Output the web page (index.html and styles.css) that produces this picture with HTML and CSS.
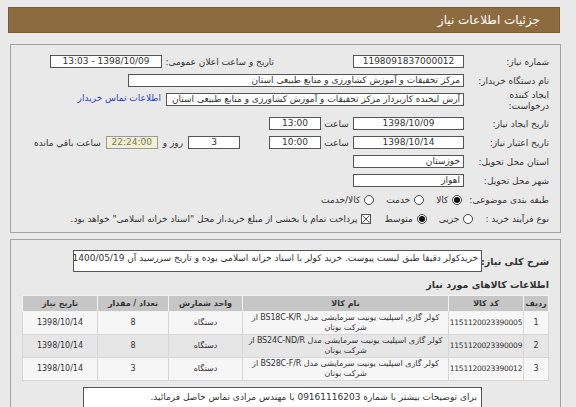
FILE: index.html
```html
<!DOCTYPE html>
<html lang="fa" dir="rtl">
<head>
<meta charset="utf-8">
<title>جزئیات اطلاعات نیاز</title>
<link rel="stylesheet" href="styles.css">
</head>
<body>
<div class="header"><span>جزئیات اطلاعات نیاز</span></div>

<div class="panel p1">
  <div class="row">
    <span class="lbl">شماره نیاز:</span>
    <span class="box w111 c">1198091837000012</span>
    <span class="lbl2">تاریخ و ساعت اعلان عمومی:</span>
    <span class="box w112 c">1398/10/09 - 13:03</span>
  </div>
  <div class="row">
    <span class="lbl">نام دستگاه خریدار:</span>
    <span class="box w336">مرکز تحقیقات و آموزش کشاورزی و منابع طبیعی استان</span>
  </div>
  <div class="row r3">
    <span class="lbl two">ایجاد کننده<br>درخواست:</span>
    <span class="box w298 mt">آرش لبخنده کاربردار مرکز تحقیقات و آموزش کشاورزی و منابع طبیعی استان</span>
    <a class="link mt" href="#">اطلاعات تماس خریدار</a>
  </div>
  <div class="row">
    <span class="lbl">تاریخ ایجاد نیاز:</span>
    <span class="box w111 c">1398/10/09</span>
    <span class="sa">ساعت</span>
    <span class="box w52 c">13:00</span>
  </div>
  <div class="row">
    <span class="lbl">تاریخ اعتبار نیاز:</span>
    <span class="box w111 c">1398/10/14</span>
    <span class="sa">ساعت</span>
    <span class="box w52 c">10:00</span>
    <span class="box w52 c days">3</span>
    <span class="rz">روز و</span>
    <span class="box w52 c remain">22:24:00</span>
    <span class="rm">ساعت باقي مانده</span>
  </div>
  <div class="row">
    <span class="lbl">استان محل تحویل:</span>
    <span class="box w111">خوزستان</span>
  </div>
  <div class="row">
    <span class="lbl">شهر محل تحویل:</span>
    <span class="box w111">اهواز</span>
  </div>
  <div class="row">
    <span class="lbl8">طبقه بندی موضوعی:</span>
    <span class="opt"><i class="radio on"></i>کالا</span>
    <span class="opt"><i class="radio"></i>خدمت</span>
    <span class="opt"><i class="radio"></i>کالا/خدمت</span>
  </div>
  <div class="row">
    <span class="lbl9">نوع فرآیند خرید :</span>
    <span class="opt"><i class="radio"></i>جزیی</span>
    <span class="opt"><i class="radio on"></i>متوسط</span>
    <span class="opt chk"><svg class="cb" width="10" height="10" viewBox="0 0 10 10"><rect x="0.5" y="0.5" width="9" height="9" fill="#fff" stroke="#555"/><path d="M1.5 1.5L8.5 8.5M8.5 1.5L1.5 8.5" stroke="#555" stroke-width="1"/></svg>پرداخت تمام یا بخشی از مبلغ خرید،از محل "اسناد خزانه اسلامی" خواهد بود.</span>
  </div>
</div>

<div class="panel p2">
  <div class="desc-row">
    <span class="dlbl">شرح کلی نیاز:</span>
    <div class="descbox">خریدکولر دقیقا طبق لیست پیوست. خرید کولر با اسناد خزانه اسلامی بوده و تاریخ سررسید آن 1400/05/19</div>
  </div>
  <div class="title">اطلاعات کالاهای مورد نیاز</div>
  <table class="items">
    <colgroup>
      <col class="c1"><col class="c2"><col class="c3"><col class="c4"><col class="c5"><col class="c6">
    </colgroup>
    <thead>
      <tr>
        <th>ردیف</th>
        <th>کد کالا</th>
        <th>نام کالا</th>
        <th>واحد شمارش</th>
        <th>تعداد / مقدار</th>
        <th>تاریخ نیاز</th>
      </tr>
    </thead>
    <tbody>
      <tr>
        <td>1</td>
        <td class="code">1151120023390005</td>
        <td class="name"><span class="l1">کولر گازی اسپلیت یونیت سرمایشی مدل <bdi>BS18C-K/R</bdi> از</span><br>شرکت بوتان</td>
        <td class="unit">دستگاه</td>
        <td>8</td>
        <td>1398/10/14</td>
      </tr>
      <tr class="alt">
        <td>2</td>
        <td class="code">1151120023390009</td>
        <td class="name"><span class="l1">کولر گازی اسپلیت یونیت سرمایشی مدل <bdi>BS24C-ND/R</bdi> از</span><br>شرکت بوتان</td>
        <td class="unit">دستگاه</td>
        <td>8</td>
        <td>1398/10/14</td>
      </tr>
      <tr>
        <td>3</td>
        <td class="code">1151120023390012</td>
        <td class="name"><span class="l1">کولر گازی اسپلیت یونیت سرمایشی مدل <bdi>BS28C-F/R</bdi> از</span><br>شرکت بوتان</td>
        <td class="unit">دستگاه</td>
        <td>3</td>
        <td>1398/10/14</td>
      </tr>
    </tbody>
  </table>
  <div class="notebox">برای توضیحات بیشتر با شماره 09161116203 با مهندس مرادی تماس حاصل فرمائید.</div>
</div>
</body>
</html>
```

FILE: styles.css
```css
html, body {
  margin: 0;
  padding: 0;
  background: #e9e9e9;
}
body {
  font-family: "DejaVu Sans", sans-serif;
  font-size: 9px;
  color: #333;
  width: 576px;
  height: 407px;
  overflow: hidden;
}
.header {
  margin: 7px 16px 0 8px;
  height: 26px;
  background: #8c6b40;
  color: #fff;
  display: flex;
  align-items: center;
  padding-right: 19px;
  font-size: 12px;
  border: 1px solid #7a5c35;
  box-sizing: border-box;
}
.panel {
  margin: 0 15px 0 10px;
  border: 1px solid #a3a3a3;
  background: #e9e9e9;
  box-sizing: border-box;
}
.p1 {
  margin-top: 11px;
  height: 189px;
  padding: 7px 11px 0 0;
}
.row {
  display: flex;
  align-items: center;
  height: 19px;
  white-space: nowrap;
}
.r3 {
  height: 24px;
  align-items: flex-start;
}
.lbl {
  width: 85px;
  flex: none;
  text-align: right;
}
.lbl.two {
  line-height: 11px;
}
.lbl8 {
  flex: none;
  margin-left: 7px;
}
.lbl9 {
  flex: none;
  margin-left: 12px;
}
.box {
  display: inline-block;
  flex: none;
  box-sizing: border-box;
  height: 13px;
  line-height: 11px;
  border: 1px solid #555;
  background: #fff;
  padding: 0 3px;
  overflow: hidden;
  text-align: right;
  font-size: 9px;
}
.box.c { text-align: center; }
.w111 { width: 111px; }
.w112 { width: 112px; }
.w336 { width: 336px; }
.w298 { width: 298px; }
.w52 { width: 52px; }
.mt { margin-top: 3px; }
.lbl2 {
  width: 110px;
  margin-right: 79px;
  margin-left: 2px;
  text-align: right;
}
.link {
  color: #2f3fb5;
  text-decoration: none;
  margin-right: 5px;
}
.sa {
  width: 25px;
  margin: 0 4px 0 3px;
  text-align: center;
}
.days { margin-right: 29px; }
.rz { margin: 0 5px; }
.remain {
  background: #f2efcc;
  border-color: #9a9a9a;
  color: #777;
}
.rm { margin-right: 5px; }
.opt {
  display: inline-flex;
  align-items: center;
  margin-left: 12px;
}
.radio {
  display: inline-block;
  width: 10px;
  height: 10px;
  box-sizing: border-box;
  border: 1px solid #444;
  border-radius: 50%;
  background: #fff;
  margin-left: 4px;
  position: relative;
}
.radio.on::after {
  content: "";
  position: absolute;
  left: 1px;
  top: 1px;
  width: 6px;
  height: 6px;
  border-radius: 50%;
  background: #111;
}
.cb { margin-left: 3px; flex: none; }
.chk { margin-right: 2px; }

.p2 {
  margin-top: 6px;
  height: 200px;
  padding: 10px 11px 0 11px;
}
.desc-row {
  display: flex;
  align-items: center;
}
.dlbl {
  width: 67px;
  flex: none;
  font-weight: bold;
  text-align: right;
  font-size: 9.5px;
  white-space: nowrap;
}
.descbox {
  width: 409px;
  height: 22px;
  box-sizing: border-box;
  border: 1px solid #555;
  background: #fff;
  padding: 1px 3px;
  line-height: 12px;
  white-space: nowrap;
  overflow: hidden;
}
.title {
  font-weight: bold;
  margin-top: 7px;
  height: 15px;
  font-size: 9.5px;
}
.items {
  width: 526px;
  table-layout: fixed;
  border-collapse: collapse;
  font-size: 8px;
  margin-top: 1px;
}
.items th {
  background: #c6c6c6;
  color: #333;
  font-weight: bold;
  height: 15px;
  padding: 0;
  border: 1px solid #f2f2f2;
}
.items td {
  background: #f6f6f6;
  border: 1px solid #d6d6d6;
  text-align: center;
  padding: 0 1px;
  height: 22px;
  line-height: 10px;
  overflow: hidden;
}
.items td.code {
  font-size: 7.5px;
  letter-spacing: -0.25px;
  padding: 0;
}
.items td .l1 {
  white-space: nowrap;
  letter-spacing: -0.15px;
}
.items tr.alt td { background: #e6e6e6; }
.c1 { width: 25px; }
.c2 { width: 75px; }
.c3 { width: 206px; }
.c4 { width: 74px; }
.c5 { width: 71px; }
.c6 { width: 75px; }
.notebox {
  margin: 6px 67px 0 0;
  width: 399px;
  height: 22px;
  box-sizing: border-box;
  border: 1px solid #555;
  background: #fff;
  padding: 3px 4px;
  line-height: 12px;
}
```
